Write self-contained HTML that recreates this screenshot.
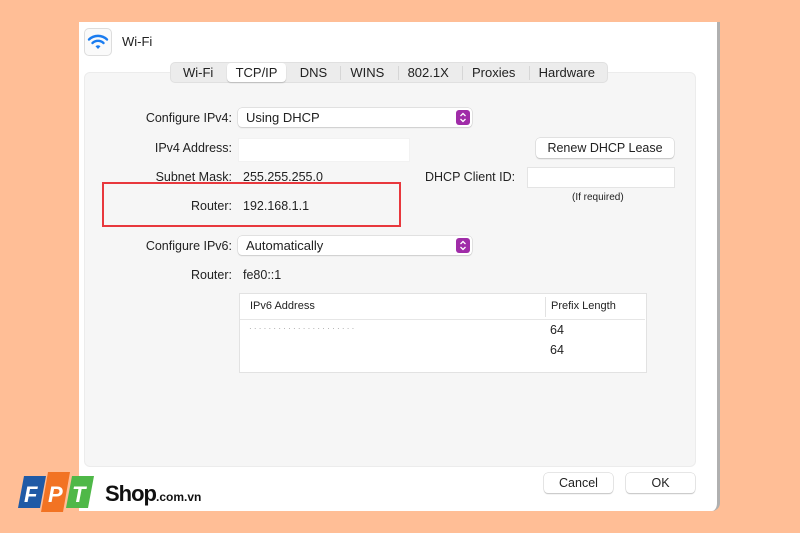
<!DOCTYPE html>
<html><head><style>
body{margin:0;width:800px;height:533px;background:#ffbe96;position:relative;overflow:hidden;font-family:"Liberation Sans",sans-serif;font-size:12.5px;color:#222}
.a{position:absolute}
.win{left:79px;top:22px;width:638px;height:489px;background:#fff;border-radius:0 0 8px 0;border-right:3px solid #b0b0b0}
.panel{left:84px;top:72px;width:610px;height:393px;background:#f6f6f6;border:1px solid #ececec;border-radius:6px}
.tabs{left:170px;top:62px;width:438px;height:21px;background:#ececec;border:1px solid #e0e0e0;border-radius:5px;display:flex;align-items:center;justify-content:space-between;font-size:13px;box-sizing:border-box;padding:0 3px}
.tabs span{padding:0 9px;border-left:1px solid #d6d6d6;line-height:14px}
.tabs span:first-child,.tabs .sel,.tabs .sel+span{border-left:none}
.tabs .sel{background:#fff;border-radius:4px;line-height:19px;box-shadow:0 1px 1px #bbb;padding:0 9px}
.lbl{text-align:right;width:150px;left:82px}
.sel2{background:#fff;border-radius:4px;box-shadow:0 0 0 .5px #ccc,0 1px 1px #ccc;height:19px;line-height:19px;padding-left:8px;box-sizing:border-box;font-size:13px}
.pp{position:absolute;right:2px;top:2px;width:14px;height:15px;background:#a02ca8;border-radius:3px}
.btn{background:#fff;border-radius:4px;box-shadow:0 0 0 .5px #ccc,0 1px 1px #bbb;text-align:center;height:20px;line-height:20px}
.fld{background:#fff;border:1px solid #e4e4e4}
</style></head><body>
<div class="a win"></div>
<div class="a" style="left:84px;top:28px;width:26px;height:26px;border:1px solid #ddd;border-radius:5px;background:#fafafa"></div>
<svg class="a" style="left:86px;top:30px" width="24" height="24" viewBox="0 0 24 24"><g fill="none" stroke="#1a7cf0" stroke-width="2.4" stroke-linecap="round"><path d="M3 9.5a13 13 0 0 1 18 0"/><path d="M6.5 13a8 8 0 0 1 11 0"/></g><path d="M9.5 16.2a4 4 0 0 1 5 0L12 19z" fill="#1a7cf0"/></svg>
<div class="a" style="left:122px;top:34px;font-size:13px">Wi-Fi</div>
<div class="a panel"></div>
<div class="a tabs"><span>Wi-Fi</span><span class="sel">TCP/IP</span><span>DNS</span><span>WINS</span><span>802.1X</span><span>Proxies</span><span>Hardware</span></div>
<div class="a lbl" style="top:111px">Configure IPv4:</div>
<div class="a sel2" style="left:238px;top:108px;width:234px">Using DHCP<svg class="pp" viewBox="0 0 14 15"><path d="M4.5 6 7 3.5 9.5 6M4.5 9 7 11.5 9.5 9" fill="none" stroke="#fff" stroke-width="1.3"/></svg></div>
<div class="a lbl" style="top:141px">IPv4 Address:</div>
<div class="a fld" style="left:238px;top:138px;width:170px;height:22px;border-color:#f2f2f2"></div>
<div class="a btn" style="left:536px;top:138px;width:138px">Renew DHCP Lease</div>
<div class="a lbl" style="top:170px">Subnet Mask:</div>
<div class="a" style="left:243px;top:170px">255.255.255.0</div>
<div class="a" style="left:425px;top:170px">DHCP Client ID:</div>
<div class="a fld" style="left:527px;top:167px;width:146px;height:19px"></div>
<div class="a" style="left:572px;top:192px;font-size:10px">(If required)</div>
<div class="a lbl" style="top:199px">Router:</div>
<div class="a" style="left:243px;top:199px">192.168.1.1</div>
<div class="a" style="left:102px;top:182px;width:295px;height:41px;border:2px solid #e8383d"></div>
<div class="a lbl" style="top:239px">Configure IPv6:</div>
<div class="a sel2" style="left:238px;top:236px;width:234px">Automatically<svg class="pp" viewBox="0 0 14 15"><path d="M4.5 6 7 3.5 9.5 6M4.5 9 7 11.5 9.5 9" fill="none" stroke="#fff" stroke-width="1.3"/></svg></div>
<div class="a lbl" style="top:268px">Router:</div>
<div class="a" style="left:243px;top:268px">fe80::1</div>
<div class="a" style="left:239px;top:293px;width:406px;height:78px;background:#fff;border:1px solid #e2e2e2"></div>
<div class="a" style="left:240px;top:294px;width:405px;height:25px;border-bottom:1px solid #e6e6e6"></div>
<div class="a" style="left:545px;top:297px;width:1px;height:20px;background:#e2e2e2"></div>
<div class="a" style="left:250px;top:300px;font-size:11px">IPv6 Address</div>
<div class="a" style="left:551px;top:300px;font-size:11px">Prefix Length</div>
<div class="a" style="left:249px;top:324px;color:#999;font-size:8px">· · · · · · · · · · · · · · · · · · · · · ·</div>
<div class="a" style="left:550px;top:323px;font-size:12.5px">64</div>
<div class="a" style="left:550px;top:343px;font-size:12.5px">64</div>
<div class="a btn" style="left:544px;top:473px;width:69px">Cancel</div>
<div class="a btn" style="left:626px;top:473px;width:69px">OK</div>
<svg class="a" style="left:14px;top:470px" width="90" height="46" viewBox="0 0 90 46"><path d="M10 6h22l-6 32H4z" fill="#1f5aa6"/><path d="M34 2h22l-7 40H27z" fill="#f27323"/><path d="M58 6h22l-6 32H52z" fill="#4fb848"/><text x="10" y="32" fill="#fff" font-size="22" font-weight="bold" font-style="italic" font-family="Liberation Sans">F</text><text x="34" y="32" fill="#fff" font-size="22" font-weight="bold" font-style="italic" font-family="Liberation Sans">P</text><text x="58" y="32" fill="#fff" font-size="22" font-weight="bold" font-style="italic" font-family="Liberation Sans">T</text></svg>
<div class="a" style="left:105px;top:481px;font-size:22px;font-weight:bold;color:#111;letter-spacing:-1px">Shop<span style="font-size:12px;letter-spacing:0">.com.vn</span></div>
</body></html>
